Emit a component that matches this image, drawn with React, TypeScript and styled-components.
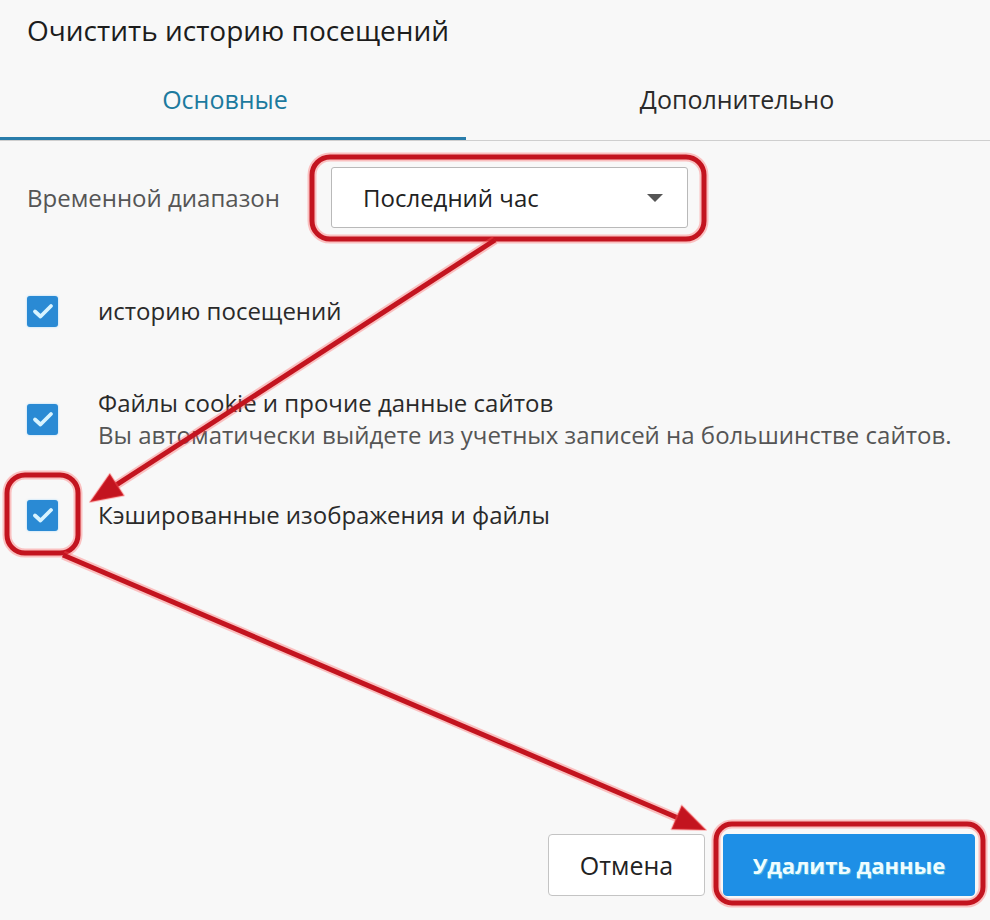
import React from "react";
import styled, { createGlobalStyle } from "styled-components";

const GlobalStyle = createGlobalStyle`
  html, body { margin: 0; padding: 0; background: #f8f8f8; }
  body { font-family: "Open Sans", "Noto Sans", sans-serif; }
`;

const Dialog = styled.div`
  position: relative;
  width: 990px;
  height: 920px;
  overflow: hidden;
  background: #f8f8f8;
  color: #222;
`;

const Title = styled.h1`
  margin: 0;
  height: 60px;
  line-height: 60px;
  padding-left: 27px;
  font-size: 28px;
  font-weight: 400;
  color: #1c1c1c;
`;

const Tabs = styled.div`
  display: grid;
  grid-template-columns: 466px 1fr;
  height: 80px;
  border-bottom: 1px solid #cfcfcf;
`;

const Tab = styled.div<{ $active?: boolean }>`
  position: relative;
  display: flex;
  align-items: center;
  justify-content: center;
  padding-bottom: 2px;
  padding-right: ${(p) => (p.$active ? "16px" : "0")};
  padding-left: ${(p) => (p.$active ? "0" : "18px")};
  font-size: 25px;
  color: ${(p) => (p.$active ? "#1c7a9e" : "#2a2a2a")};
  &::after {
    content: "";
    display: ${(p) => (p.$active ? "block" : "none")};
    position: absolute;
    left: 0;
    right: 0;
    bottom: 0;
    height: 3px;
    background: #2a7dab;
  }
`;

const Body = styled.div`
  padding: 26px 0 0 27px;
`;

const RangeRow = styled.div`
  display: flex;
  align-items: center;
`;

const RangeLabel = styled.span`
  width: 304px;
  font-size: 24px;
  color: #555;
`;

const Select = styled.div`
  box-sizing: border-box;
  width: 357px;
  height: 61px;
  display: flex;
  align-items: center;
  justify-content: space-between;
  padding: 0 24px 0 31px;
  background: #fff;
  border: 1px solid #b9b9b9;
  border-radius: 3px;
  font-size: 24px;
  color: #222;
`;

const Caret = styled.span`
  width: 0;
  height: 0;
  border-left: 8px solid transparent;
  border-right: 8px solid transparent;
  border-top: 8px solid #555;
`;

const Row = styled.div<{ $top: number }>`
  display: flex;
  align-items: center;
  gap: 40px;
  margin-top: ${(p) => p.$top}px;
`;

const Box = styled.span`
  flex: none;
  width: 31px;
  height: 31px;
  display: flex;
  align-items: center;
  justify-content: center;
  background: #2a8ad4;
  border-radius: 3px;
  box-shadow: 0 0 2px rgba(60, 180, 255, 0.5);
`;

const Texts = styled.div`
  display: flex;
  flex-direction: column;
`;

const Main = styled.span`
  font-size: 24px;
  line-height: 32px;
  color: #2a2a2a;
`;

const Sub = styled.span`
  font-size: 24px;
  line-height: 32px;
  color: #555;
`;

const Footer = styled.div`
  display: flex;
  justify-content: flex-end;
  gap: 18px;
  margin-top: 303px;
  padding-right: 15px;
`;

const Button = styled.button<{ $primary?: boolean }>`
  box-sizing: border-box;
  height: 62px;
  padding: 0;
  width: ${(p) => (p.$primary ? "252px" : "157px")};
  border-radius: 4px;
  font-family: "Open Sans", "Noto Sans", sans-serif;
  font-size: ${(p) => (p.$primary ? "22px" : "25px")};
  font-weight: ${(p) => (p.$primary ? 700 : 400)};
  color: ${(p) => (p.$primary ? "#effcff" : "#222")};
  background: ${(p) => (p.$primary ? "#1e8fe6" : "#fff")};
  border: 1px solid ${(p) => (p.$primary ? "#1e8fe6" : "#c4c4c4")};
  text-shadow: ${(p) => (p.$primary ? "1px 1px 0 #4ab8e0" : "none")};
`;

const Overlay = styled.svg`
  position: absolute;
  left: 0;
  top: 0;
  pointer-events: none;
`;

const Check = () => (
  <svg width="22" height="18" viewBox="0 0 22 18">
    <path d="M3 9.5 L8.5 14.5 L19 4" fill="none" stroke="#d8f4ff" strokeWidth="3.8" strokeLinecap="round" strokeLinejoin="round" />
  </svg>
);

const RED = "#c3141f";
const GLOW = "rgba(255, 90, 90, 0.35)";

const arrowHead = (tx: number, ty: number, fx: number, fy: number, len: number, half: number) => {
  const dx = tx - fx;
  const dy = ty - fy;
  const l = Math.hypot(dx, dy);
  const ux = dx / l;
  const uy = dy / l;
  const bx = tx - ux * len;
  const by = ty - uy * len;
  const nx = -uy * half;
  const ny = ux * half;
  return `${tx},${ty} ${bx + nx},${by + ny} ${bx - nx},${by - ny}`;
};

const Annotations = () => {
  const rects = [
    { x: 312, y: 157, w: 392, h: 82, r: 18 },
    { x: 7, y: 475, w: 71, h: 78, r: 18 },
    { x: 716, y: 824, w: 267, h: 79, r: 16 },
  ];
  const arrows = [
    { x1: 495, y1: 240, x2: 90, y2: 502 },
    { x1: 63, y1: 555, x2: 706, y2: 830 },
  ];
  return (
    <Overlay width="990" height="920" viewBox="0 0 990 920">
      {rects.map((r, i) => (
        <g key={"r" + i}>
          <rect x={r.x} y={r.y} width={r.w} height={r.h} rx={r.r} fill="none" stroke={GLOW} strokeWidth="9" />
          <rect x={r.x} y={r.y} width={r.w} height={r.h} rx={r.r} fill="none" stroke={RED} strokeWidth="5" />
        </g>
      ))}
      {arrows.map((a, i) => {
        const dx = a.x2 - a.x1;
        const dy = a.y2 - a.y1;
        const l = Math.hypot(dx, dy);
        const ex = a.x2 - (dx / l) * 24;
        const ey = a.y2 - (dy / l) * 24;
        return (
          <g key={"a" + i}>
            <line x1={a.x1} y1={a.y1} x2={ex} y2={ey} stroke={GLOW} strokeWidth="9" />
            <line x1={a.x1} y1={a.y1} x2={ex} y2={ey} stroke={RED} strokeWidth="5" />
            <polygon points={arrowHead(a.x2, a.y2, a.x1, a.y1, 32, 13)} fill={RED} stroke={GLOW} strokeWidth="2" strokeLinejoin="round" />
          </g>
        );
      })}
    </Overlay>
  );
};

export default function App() {
  return (
    <Dialog>
      <GlobalStyle />
      <Title>Очистить историю посещений</Title>
      <Tabs>
        <Tab $active>Основные</Tab>
        <Tab>Дополнительно</Tab>
      </Tabs>
      <Body>
        <RangeRow>
          <RangeLabel>Временной диапазон</RangeLabel>
          <Select>
            <span>Последний час</span>
            <Caret />
          </Select>
        </RangeRow>
        <Row $top={67}>
          <Box><Check /></Box>
          <Texts><Main>историю посещений</Main></Texts>
        </Row>
        <Row $top={60}>
          <Box><Check /></Box>
          <Texts>
            <Main>Файлы cookie и прочие данные сайтов</Main>
            <Sub>Вы автоматически выйдете из учетных записей на большинстве сайтов.</Sub>
          </Texts>
        </Row>
        <Row $top={48}>
          <Box><Check /></Box>
          <Texts><Main>Кэшированные изображения и файлы</Main></Texts>
        </Row>
      </Body>
      <Footer>
        <Button>Отмена</Button>
        <Button $primary>Удалить данные</Button>
      </Footer>
      <Annotations />
    </Dialog>
  );
}
